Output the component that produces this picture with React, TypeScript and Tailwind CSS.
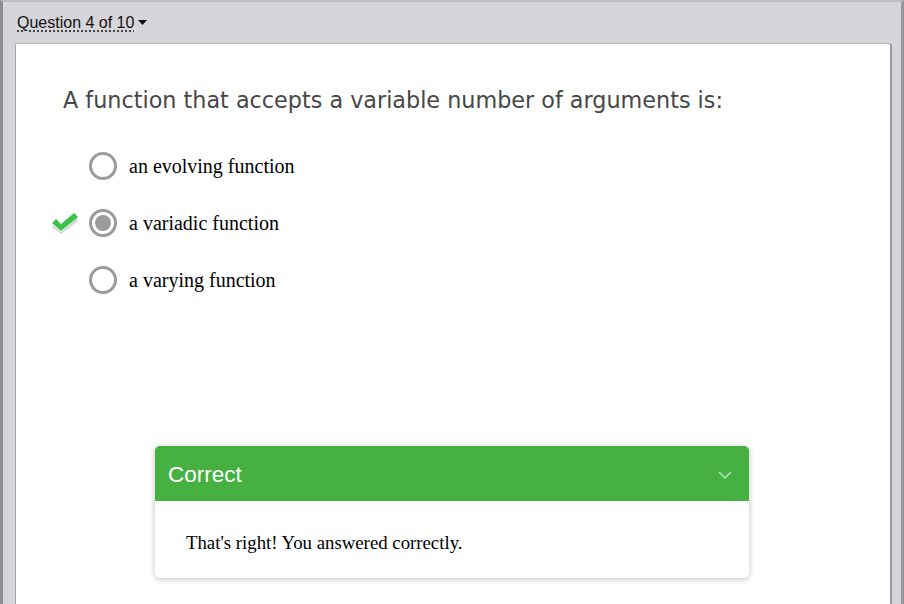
import React from "react";

function Radio({ checked }: { checked?: boolean }) {
  return (
    <span className="flex h-[28px] w-[28px] shrink-0 items-center justify-center rounded-full border-[3px] border-[#9b9b9b] bg-white">
      {checked && <span className="block h-[16px] w-[16px] rounded-full bg-[#9b9b9b]" />}
    </span>
  );
}

function Check() {
  return (
    <svg width="27" height="22" viewBox="0 0 27 22">
      <path d="M1 13 L9 20 L25 6 L26 9 L9 22 L0 15 Z" fill="#d4d4d4" />
      <path d="M0 11 L4 7 L9 12 L22 1 L26 5 L9 19 Z" fill="#3fc24a" />
    </svg>
  );
}

export default function App() {
  const options = [
    { label: "an evolving function" },
    { label: "a variadic function", checked: true, correct: true },
    { label: "a varying function" },
  ];
  return (
    <div className="flex h-[604px] w-[904px] flex-col overflow-hidden border-l-[3px] border-r-[3px] border-t-[2px] border-l-[#8d8d91] border-r-[#98979c] border-t-[#bdbcc0] bg-[#d6d5d9]">
      <div className="flex h-[41px] shrink-0 items-center pl-[14px] pt-[1px]">
        <span
          className="text-[16px] leading-none text-[#111] underline decoration-dotted decoration-[#222] underline-offset-[3px]"
          style={{ fontFamily: '"Liberation Sans", Arial, sans-serif' }}
        >
          Question 4 of 10
        </span>
        <svg className="ml-[4px]" width="9" height="6" viewBox="0 0 9 6">
          <path d="M0 0 L9 0 L4.5 5 Z" fill="#111" />
        </svg>
      </div>
      <div className="ml-[12px] mr-[9px] flex-1 rounded-tr-[3px] border-l border-r-2 border-t border-l-[#a9a9ad] border-r-[#9a999e] border-t-[#b3b2b6] bg-white">
        <div
          className="pl-[47px] pt-[45px] text-[22.3px] leading-none text-[#474747]"
          style={{ fontFamily: '"DejaVu Sans", Verdana, sans-serif' }}
        >
          A function that accepts a variable number of arguments is:
        </div>
        <div className="mt-[41px] flex flex-col gap-[29px]">
          {options.map((o) => (
            <div key={o.label} className="flex h-[28px] items-center">
              <span className="flex w-[73px] justify-end pr-[10px]">{o.correct && <Check />}</span>
              <Radio checked={o.checked} />
              <span
                className="ml-[12px] text-[20px] text-black"
                style={{ fontFamily: '"Liberation Serif", "Times New Roman", serif' }}
              >
                {o.label}
              </span>
            </div>
          ))}
        </div>
        <div className="ml-[139px] mt-[152px] w-[594px] overflow-hidden rounded-[5px] bg-white shadow-[0_1px_6px_rgba(0,0,0,0.25)]">
          <div className="flex h-[55px] items-center justify-between bg-[#46b041] pl-[13px] pr-[17px] pt-[3px]">
            <span
              className="text-[22.5px] text-white"
              style={{ fontFamily: '"Liberation Sans", Arial, sans-serif' }}
            >
              Correct
            </span>
            <svg width="14" height="9" viewBox="0 0 14 9">
              <path d="M1 1 L7 7 L13 1" fill="none" stroke="#b9e2b5" strokeWidth="1.5" />
            </svg>
          </div>
          <div
            className="h-[77px] pl-[31px] pt-[33px] text-[18.8px] leading-none text-black"
            style={{ fontFamily: '"Liberation Serif", "Times New Roman", serif' }}
          >
            That's right! You answered correctly.
          </div>
        </div>
      </div>
    </div>
  );
}
